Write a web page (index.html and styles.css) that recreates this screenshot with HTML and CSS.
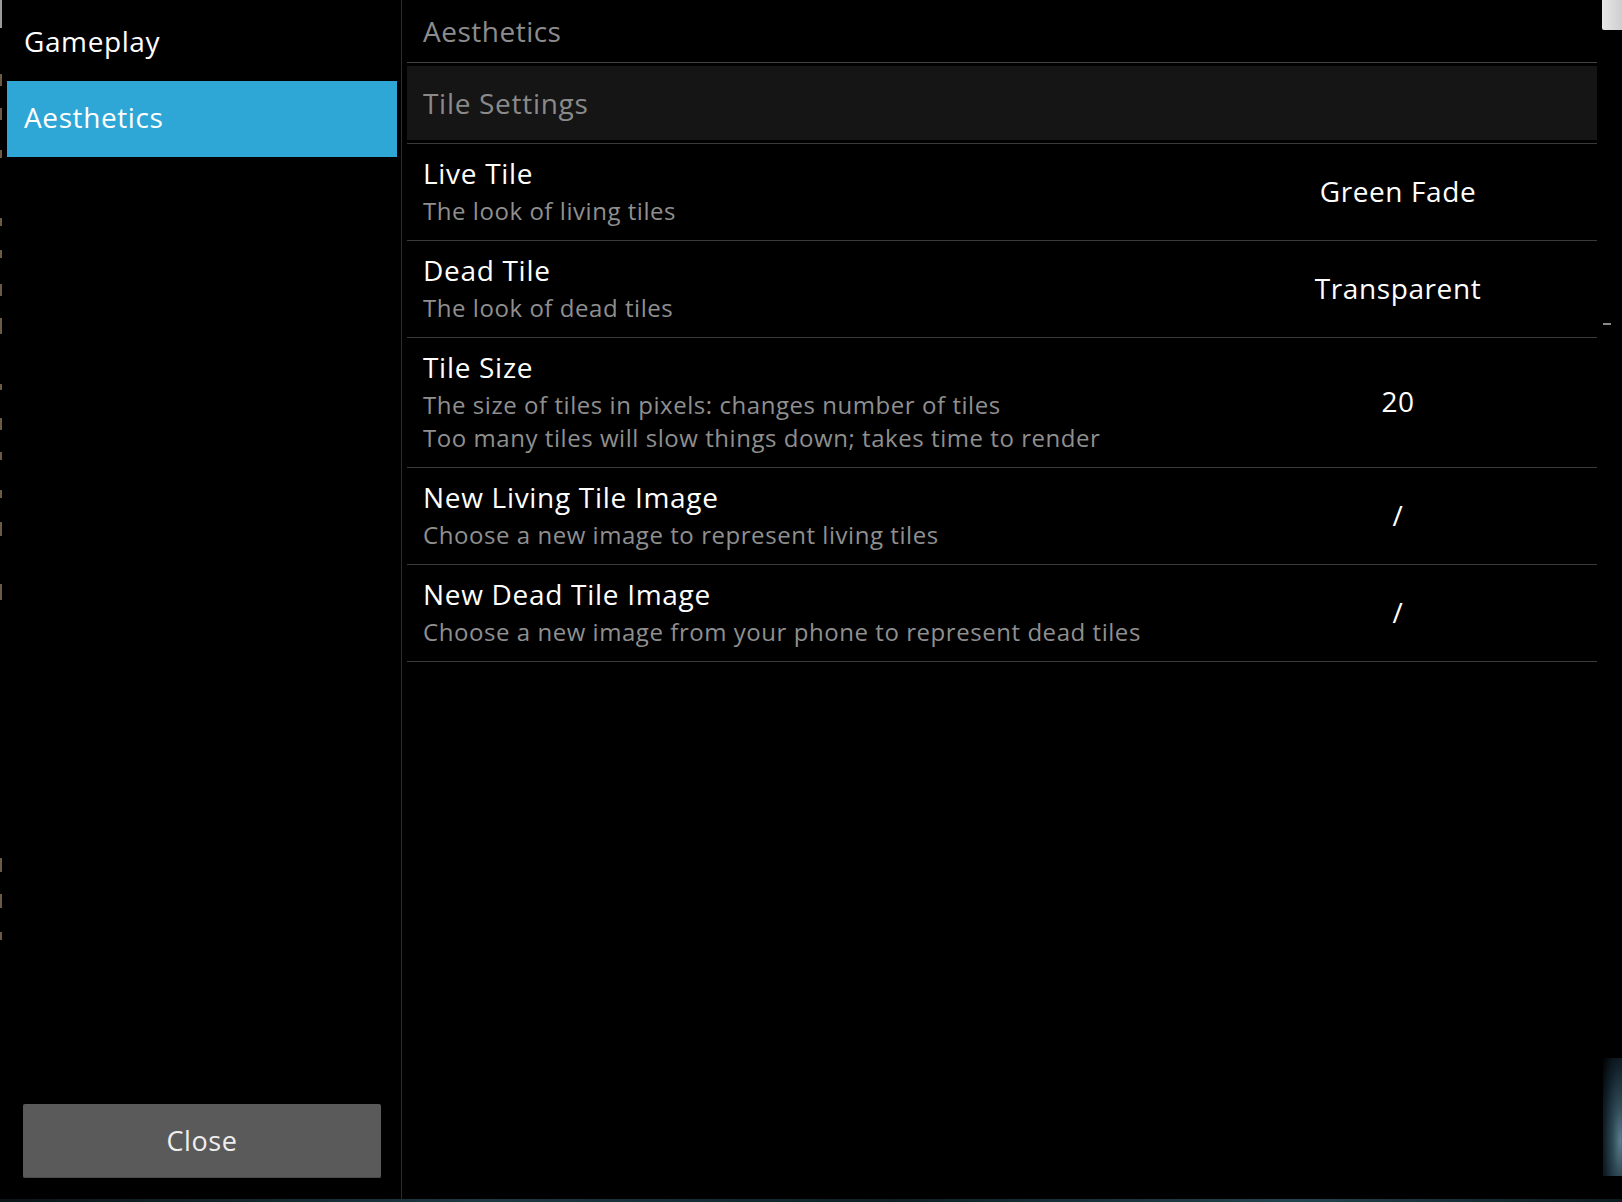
FILE: index.html
```html
<!DOCTYPE html>
<html lang="en">
<head>
<meta charset="utf-8">
<title>Settings - Aesthetics</title>
<link rel="stylesheet" href="styles.css">
</head>
<body>
<div class="screen">
  <div class="edge-left">
    <span class="mark m1"></span>
    <span class="mark m2"></span>
    <span class="mark m3"></span>
    <span class="mark m4"></span>
    <span class="mark m5"></span>
    <span class="mark m6"></span>
    <span class="mark m7"></span>
    <span class="mark m8"></span>
    <span class="mark m9"></span>
    <span class="mark m10"></span>
    <span class="mark m11"></span>
    <span class="mark m12"></span>
    <span class="mark m13"></span>
    <span class="mark m14"></span>
    <span class="mark m15"></span>
    <span class="mark m16"></span>
    <span class="mark m17"></span>
  </div>
  <div class="dialog">
    <aside class="sidebar">
      <ul class="headers">
        <li class="header">Gameplay</li>
        <li class="header active">Aesthetics</li>
      </ul>
      <button class="close-btn">Close</button>
    </aside>
    <main class="prefs">
      <div class="breadcrumb">Aesthetics</div>
      <div class="category">Tile Settings</div>
      <div class="pref">
        <div class="pref-text">
          <div class="pref-title">Live Tile</div>
          <div class="pref-summary">The look of living tiles</div>
        </div>
        <div class="pref-value">Green Fade</div>
      </div>
      <div class="pref">
        <div class="pref-text">
          <div class="pref-title">Dead Tile</div>
          <div class="pref-summary">The look of dead tiles</div>
        </div>
        <div class="pref-value">Transparent</div>
      </div>
      <div class="pref">
        <div class="pref-text">
          <div class="pref-title">Tile Size</div>
          <div class="pref-summary">The size of tiles in pixels: changes number of tiles</div>
          <div class="pref-summary">Too many tiles will slow things down; takes time to render</div>
        </div>
        <div class="pref-value">20</div>
      </div>
      <div class="pref">
        <div class="pref-text">
          <div class="pref-title">New Living Tile Image</div>
          <div class="pref-summary">Choose a new image to represent living tiles</div>
        </div>
        <div class="pref-value">/</div>
      </div>
      <div class="pref">
        <div class="pref-text">
          <div class="pref-title">New Dead Tile Image</div>
          <div class="pref-summary">Choose a new image from your phone to represent dead tiles</div>
        </div>
        <div class="pref-value">/</div>
      </div>
    </main>
  </div>
  <div class="edge-right">
    <div class="thumb"></div>
    <div class="dash"></div>
    <div class="glow"></div>
  </div>
</div>
</body>
</html>
```
FILE: styles.css
```css
* { box-sizing: border-box; }

html, body {
  margin: 0;
  padding: 0;
  background: #000;
}

body {
  font-family: "Open Sans", "Noto Sans", "DejaVu Sans", sans-serif;
  color: #fff;
}

.screen {
  width: 1622px;
  height: 1202px;
  overflow: hidden;
  display: flex;
  background:
    linear-gradient(90deg, #0b1417 0%, #1d3a44 30%, #0e2026 55%, #23444f 80%, #0c1a1f 100%) bottom / 100% 3px no-repeat,
    #000;
}

/* thin strip of wallpaper visible on the left */
.edge-left {
  width: 3px;
  height: 1199px;
  position: relative;
  flex: none;
}
.mark {
  position: absolute;
  left: 0;
  width: 2px;
  height: 10px;
  background: #6b5a44;
}
.m1 { top: 0; height: 28px; background: #9a9a9a; }
.m2 { top: 74px; height: 12px; }
.m3 { top: 108px; height: 12px; }
.m4 { top: 150px; height: 8px; }
.m5 { top: 218px; height: 8px; }
.m6 { top: 250px; height: 8px; }
.m7 { top: 284px; height: 12px; }
.m8 { top: 318px; height: 16px; }
.m9 { top: 384px; height: 6px; }
.m10 { top: 418px; height: 12px; }
.m11 { top: 452px; height: 8px; }
.m12 { top: 490px; height: 8px; }
.m13 { top: 522px; height: 14px; }
.m14 { top: 584px; height: 16px; }
.m15 { top: 858px; height: 14px; }
.m16 { top: 894px; height: 14px; }
.m17 { top: 932px; height: 8px; }

.dialog {
  width: 1599px;
  height: 1199px;
  flex: none;
  display: flex;
  background: #000;
  border-bottom-left-radius: 4px;
}

/* ---------- left: headers ---------- */
.sidebar {
  width: 399px;
  flex: none;
  display: flex;
  flex-direction: column;
  border-right: 1px solid #2c2c2c;
  padding: 5px 0 21px;
}

.headers {
  list-style: none;
  margin: 0;
  padding: 0;
  flex: 1;
}

.header {
  height: 76px;
  margin: 0 4px;
  padding: 0 0 4px 17px;
  display: flex;
  align-items: center;
  font-size: 28px;
  letter-spacing: 0.6px;
  color: #fff;
}

.header.active {
  background: #2fa7d6;
}

.close-btn {
  margin: 0 20px;
  height: 74px;
  border: none;
  border-radius: 2px;
  background: #5a5a5a;
  box-shadow: inset 0 -1px 0 #4a4a4a;
  color: #eeeeee;
  font-family: "Open Sans", "Noto Sans", "DejaVu Sans", sans-serif;
  font-size: 27px;
  letter-spacing: 0.6px;
  padding: 0 0 2px;
}

/* ---------- right: preferences ---------- */
.prefs {
  flex: 1;
  padding: 0 5px;
  display: flex;
  flex-direction: column;
}

.breadcrumb {
  height: 63px;
  padding: 12px 0 0 16px;
  font-size: 28px;
  line-height: 38px;
  letter-spacing: 0.5px;
  color: #8c8c8c;
  border-bottom: 1px solid #444;
}

.category {
  margin: 3px 0;
  height: 74px;
  background: #151515;
  padding: 0 0 0 16px;
  display: flex;
  align-items: center;
  font-size: 28px;
  letter-spacing: 0.7px;
  color: #8a8a8a;
}

.pref {
  display: flex;
  align-items: center;
  border-top: 1px solid #3a3a3a;
  padding: 10px 0 13px 16px;
}
.pref:last-child {
  border-bottom: 1px solid #3a3a3a;
}

.pref-text {
  flex: 1;
}

.pref-title {
  font-size: 28px;
  line-height: 38px;
  padding-bottom: 2px;
  letter-spacing: 0.7px;
  color: #fff;
}

.pref-summary {
  font-size: 24px;
  line-height: 33px;
  letter-spacing: 0.55px;
  color: #8f8f8f;
}

.pref-value {
  width: 398px;
  flex: none;
  text-align: center;
  font-size: 28px;
  letter-spacing: 0.6px;
  color: #fff;
}

/* ---------- right edge: wallpaper strip ---------- */
.edge-right {
  width: 20px;
  height: 1199px;
  flex: none;
  position: relative;
}
.thumb {
  position: absolute;
  top: 0;
  left: 0;
  width: 20px;
  height: 30px;
  background: linear-gradient(90deg, #e6e6e6, #cfcfcf);
  border-bottom-left-radius: 2px;
}
.dash {
  position: absolute;
  top: 323px;
  left: 1px;
  width: 8px;
  height: 2px;
  background: #8a8a8a;
}
.glow {
  position: absolute;
  top: 1058px;
  left: 1px;
  width: 19px;
  height: 118px;
  background:
    radial-gradient(ellipse at 90% 70%, #5a7c8c 0%, #2f4a56 30%, #11202a 65%, #000 100%);
}
```
